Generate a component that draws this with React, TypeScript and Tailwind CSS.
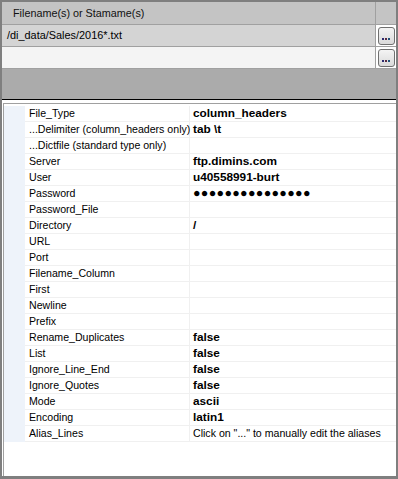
import React from "react";

const rows: { label: string; value?: string; bold?: boolean; dots?: boolean }[] = [
  { label: "File_Type", value: "column_headers", bold: true },
  { label: "...Delimiter (column_headers only)", value: "tab \\t", bold: true },
  { label: "...Dictfile (standard type only)" },
  { label: "Server", value: "ftp.dimins.com", bold: true },
  { label: "User", value: "u40558991-burt", bold: true },
  { label: "Password", dots: true },
  { label: "Password_File" },
  { label: "Directory", value: "/", bold: true },
  { label: "URL" },
  { label: "Port" },
  { label: "Filename_Column" },
  { label: "First" },
  { label: "Newline" },
  { label: "Prefix" },
  { label: "Rename_Duplicates", value: "false", bold: true },
  { label: "List", value: "false", bold: true },
  { label: "Ignore_Line_End", value: "false", bold: true },
  { label: "Ignore_Quotes", value: "false", bold: true },
  { label: "Mode", value: "ascii", bold: true },
  { label: "Encoding", value: "latin1", bold: true },
  { label: "Alias_Lines", value: 'Click on "..." to manually edit the aliases' },
];

function DotButton() {
  return (
    <div className="w-[17px] h-[18px] rounded-[3px] border border-[#707070] bg-gradient-to-b from-[#f4f4f4] to-[#dadada] flex items-end justify-center pb-[4px] gap-[1px]">
      <span className="w-[2px] h-[2px] bg-[#2a2a70]" />
      <span className="w-[2px] h-[2px] bg-[#5a2a40]" />
      <span className="w-[2px] h-[2px] bg-[#20507a]" />
    </div>
  );
}

export default function App() {
  return (
    <div
      className="w-[398px] h-[479px] border-t-2 border-l-2 border-r-2 border-b-[3px] border-[#7f7f7f] flex flex-col bg-white text-black"
      style={{ fontFamily: '"Liberation Sans", Arial, sans-serif' }}
    >
      {/* top grid */}
      <div className="flex h-[23px] bg-[#c4c4c4] border-b border-[#a0a0a0]">
        <div className="flex-1 border-r border-[#a0a0a0] flex items-center pl-[11px] text-[10.8px] text-[#111]">
          Filename(s) or Stamame(s)
        </div>
        <div className="w-[20px]" />
      </div>
      <div className="flex h-[22px] bg-[#d4d4d4] border-b border-[#a0a0a0]">
        <div className="flex-1 border-r border-[#a0a0a0] flex items-center pl-[5px] text-[10.9px]">
          /di_data/Sales/2016*.txt
        </div>
        <div className="w-[20px] bg-white flex items-center justify-center">
          <DotButton />
        </div>
      </div>
      <div className="flex h-[22px] bg-[#f4f4f4] border-b border-[#a0a0a0]">
        <div className="flex-1 border-r border-[#a0a0a0]" />
        <div className="w-[20px] bg-white flex items-center justify-center">
          <DotButton />
        </div>
      </div>
      <div className="h-[30px] bg-[#ababab]" />
      <div className="h-[1px] bg-black" />
      {/* property grid */}
      <div className="flex-1 flex flex-col pl-[1px] pt-[3px]">
        <div className="flex-1 border-l border-t border-[#a0a0a0] pt-[2px]">
          <div className="flex">
            <div className="w-[21px] bg-[#eef3fa]" />
            <div className="flex-1 flex flex-col">
              {rows.map((r) => (
                <div key={r.label} className="flex h-[16px] border-b border-[#f0f0f0]">
                  <div className="w-[165px] border-r border-[#f0f0f0] pl-[4px] flex items-center text-[10.6px] whitespace-nowrap">
                    {r.label}
                  </div>
                  <div
                    className={
                      "flex-1 pl-[3px] flex items-center whitespace-nowrap " +
                      (r.bold ? "font-bold text-[11.8px]" : "text-[10.6px]")
                    }
                  >
                    {r.dots ? (
                      <span className="text-[12.5px] tracking-[0.3px] font-bold leading-none">●●●●●●●●●●●●●●●</span>
                    ) : (
                      r.value
                    )}
                  </div>
                </div>
              ))}
            </div>
          </div>
        </div>
      </div>
    </div>
  );
}
